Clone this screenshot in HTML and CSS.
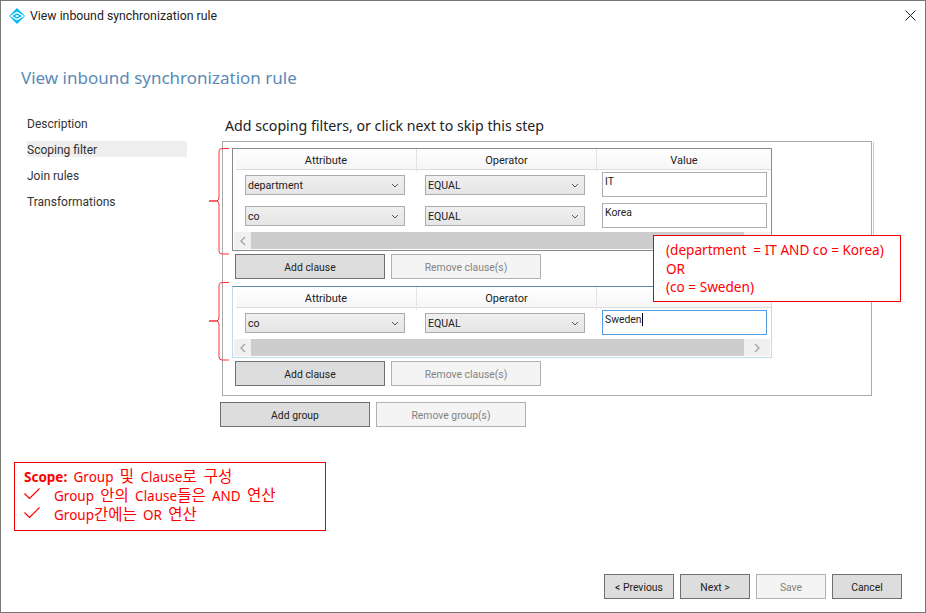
FILE: index.html
```html
<!DOCTYPE html>
<html lang="en">

<head>
    <meta charset="UTF-8">
    <title>View inbound synchronization rule</title>
    <link rel="stylesheet" href="styles.css">
</head>

<body>

    <div class="window">
        <header class="titlebar">
            <svg class="app-icon" viewBox="0 0 16 16">
                <path fill="#00b9f5" d="M8 0l8 8-8 8-8-8z"/>
                <path fill="none" stroke="#fff" stroke-width="1.4" d="M2 8l6-3.6L14 8l-6 3.6z"/>
                <path fill="#fff" d="M8 6.8L10 8 8 9.2 6 8z"/>
            </svg>
            <span class="titlebar-text">View inbound synchronization rule</span>
            <svg class="close" viewBox="0 0 11 11">
                <path fill="none" stroke="#222" stroke-width="1" d="M.5.5l10 10M10.5.5l-10 10"/>
            </svg>
        </header>

        <h1 class="page-title">View inbound synchronization rule</h1>

        <div class="content">
            <nav class="steps">
                <div class="step">Description</div>
                <div class="step step-active">Scoping filter</div>
                <div class="step">Join rules</div>
                <div class="step">Transformations</div>
            </nav>

            <main class="panel">
                <h2 class="panel-title">Add scoping filters, or click next to skip this step</h2>

                <div class="group-box">
                    <div class="clause-table">
                        <div class="clause-row clause-head">
                            <div class="head-cell">Attribute</div>
                            <div class="head-cell">Operator</div>
                            <div class="head-cell">Value</div>
                        </div>
                        <div class="clause-row">
                            <div class="combo combo-attr"><span>department</span>
                                <svg class="chevron" viewBox="0 0 8 5"><path d="M1 1l3 3 3-3"/></svg></div>
                            <div class="combo"><span>EQUAL</span>
                                <svg class="chevron" viewBox="0 0 8 5"><path d="M1 1l3 3 3-3"/></svg></div>
                            <div class="value-box">IT</div>
                        </div>
                        <div class="clause-row">
                            <div class="combo combo-attr"><span>co</span>
                                <svg class="chevron" viewBox="0 0 8 5"><path d="M1 1l3 3 3-3"/></svg></div>
                            <div class="combo"><span>EQUAL</span>
                                <svg class="chevron" viewBox="0 0 8 5"><path d="M1 1l3 3 3-3"/></svg></div>
                            <div class="value-box">Korea</div>
                        </div>
                        <div class="scrollbar">
                            <div class="scroll-btn"><svg viewBox="0 0 6 10"><path d="M5 1L1 5l4 4"/></svg></div>
                            <div class="scroll-thumb"></div>
                            <div class="scroll-btn scroll-btn-end"><svg viewBox="0 0 6 10"><path d="M1 1l4 4-4 4"/></svg></div>
                        </div>
                    </div>
                    <div class="btn-row btn-row-clause">
                        <button class="btn btn-wide">Add clause</button>
                        <button class="btn btn-wide btn-off">Remove clause(s)</button>
                    </div>

                    <div class="clause-table clause-table-focus">
                        <div class="clause-row clause-head">
                            <div class="head-cell">Attribute</div>
                            <div class="head-cell">Operator</div>
                            <div class="head-cell"></div>
                        </div>
                        <div class="clause-row">
                            <div class="combo combo-attr"><span>co</span>
                                <svg class="chevron" viewBox="0 0 8 5"><path d="M1 1l3 3 3-3"/></svg></div>
                            <div class="combo"><span>EQUAL</span>
                                <svg class="chevron" viewBox="0 0 8 5"><path d="M1 1l3 3 3-3"/></svg></div>
                            <div class="value-box value-focus"><span class="caret">Sweden</span></div>
                        </div>
                        <div class="scrollbar">
                            <div class="scroll-btn"><svg viewBox="0 0 6 10"><path d="M5 1L1 5l4 4"/></svg></div>
                            <div class="scroll-thumb"></div>
                            <div class="scroll-btn scroll-btn-end"><svg viewBox="0 0 6 10"><path d="M1 1l4 4-4 4"/></svg></div>
                        </div>
                    </div>
                    <div class="btn-row btn-row-clause">
                        <button class="btn btn-wide">Add clause</button>
                        <button class="btn btn-wide btn-off">Remove clause(s)</button>
                    </div>
                </div>

                <div class="btn-row btn-row-group">
                    <button class="btn btn-wide">Add group</button>
                    <button class="btn btn-wide btn-off">Remove group(s)</button>
                </div>
            </main>
        </div>

        <footer class="footer">
            <button class="btn btn-nav">&lt; Previous</button>
            <button class="btn btn-nav">Next &gt;</button>
            <button class="btn btn-nav btn-off">Save</button>
            <button class="btn btn-nav">Cancel</button>
        </footer>

        <!-- red notes drawn on top of the screenshot -->
        <svg class="braces" viewBox="205 140 30 230">
            <path d="M229 148.5h-7q-3 0-3 3V198q0 3-3 3h-7h7q3 0 3 3v47q0 3 3 3h7"/>
            <path d="M229 282.5h-7q-3 0-3 3V318q0 3-3 3h-7h7q3 0 3 3v33q0 3 3 3h7"/>
        </svg>

        <div class="note note-logic">
            <div>(department&nbsp; = IT AND co = Korea)</div>
            <div>OR</div>
            <div>(co = Sweden)</div>
        </div>

        <div class="note note-scope">
            <div class="note-line"><b>Scope:</b> Group <span class="ko">및</span> Clause<span class="ko">로 구성</span></div>
            <div class="note-line note-check">
                <svg viewBox="0 0 16 11"><path d="M.5 5.5l5 5L15.5.5"/></svg>
                <span>Group <span class="ko">안의</span> Clause<span class="ko">들은</span> AND <span class="ko">연산</span></span>
            </div>
            <div class="note-line note-check">
                <svg viewBox="0 0 16 11"><path d="M.5 5.5l5 5L15.5.5"/></svg>
                <span>Group<span class="ko">간에는</span> OR <span class="ko">연산</span></span>
            </div>
        </div>
    </div>

</body>

</html>
```

FILE: styles.css
```css
body {
    margin: 0;
    background-color: #fff;
    color: #222;
    font-family: Roboto, "Noto Sans", sans-serif;
    font-size: 11px;
}

.window {
    position: relative;
    box-sizing: border-box;
    width: 926px;
    height: 613px;
    border: 1px solid #777;
    display: flex;
    flex-direction: column;
    overflow: hidden;
}

.titlebar {
    height: 30px;
    display: flex;
    align-items: center;
    padding: 0 9px 0 8px;
}

.app-icon {
    width: 16px;
    height: 16px;
    margin-right: 5px;
}

.titlebar-text {
    font-size: 12.3px;
}

.close {
    width: 11px;
    height: 11px;
    margin: 0 0 2px auto;
}

.page-title {
    margin: 35px 0 0 20px;
    font-family: "Noto Sans", sans-serif;
    font-size: 17px;
    line-height: 24px;
    font-weight: 400;
    color: #5a8ab5;
}

.content {
    display: flex;
    margin-top: 25px;
}

.steps {
    width: 160px;
    margin-left: 26px;
    display: flex;
    flex-direction: column;
    gap: 10px;
}

.step {
    height: 16px;
    line-height: 19px;
    font-size: 12px;
    color: #333;
}

.step-active {
    background-color: #eee;
}

.panel {
    margin: 1px 0 0 33px;
}

.panel-title {
    margin: 0 0 5px 5px;
    font-family: "Noto Sans", sans-serif;
    font-size: 14.2px;
    line-height: 20px;
    font-weight: 400;
}

.group-box {
    position: relative;
    box-sizing: border-box;
    width: 650px;
    height: 255px;
    margin-left: 2px;
    padding: 6px 0 0 9px;
    border: 1px solid #aaa;
}

.group-box::after {
    content: "";
    position: absolute;
    top: 0;
    right: -3px;
    width: 1px;
    height: 95px;
    background-color: #ccc;
}

.clause-table {
    box-sizing: border-box;
    width: 540px;
    padding-bottom: 1px;
    border: 1px solid #8a8a8a;
}

.clause-table-focus {
    margin-top: 7px;
    border-color: #c0dcec;
    border-top-color: #5b8db5;
}

.clause-row {
    display: grid;
    grid-template-columns: 180px 180px 175px;
    margin-left: 3px;
}

.clause-head {
    height: 21px;
    box-sizing: border-box;
    border-bottom: 1px solid #ddd;
    background: linear-gradient(#fff, #f6f6f6);
}

.head-cell {
    line-height: 23px;
    text-align: center;
    border-left: 1px solid #e4e4e4;
}

.head-cell:first-child {
    border-left: 0;
}

.combo {
    box-sizing: border-box;
    width: 160px;
    height: 20px;
    margin: 5px 0 0 9px;
    padding: 0 5px 0 2px;
    display: flex;
    align-items: center;
    justify-content: space-between;
    border: 1px solid #acacac;
    background: linear-gradient(#f0f0f0, #e5e5e5);
    font-size: 10.6px;
}

.chevron {
    width: 8px;
    height: 5px;
    fill: none;
    stroke: #555;
}

.value-box {
    box-sizing: border-box;
    width: 165px;
    height: 25px;
    margin: 2px 0 4px 6px;
    padding: 0 2px;
    font-size: 10.4px;
    line-height: 18px;
    border: 1px solid #abadb3;
}

.value-focus {
    border-color: #569de5;
}

.caret {
    border-right: 1px solid #000;
}

.scrollbar {
    height: 17px;
    margin: 0 1px;
    display: flex;
    background-color: #f0f0f0;
}

.scroll-btn {
    width: 17px;
    display: flex;
    align-items: center;
    justify-content: center;
}

.scroll-btn-end {
    width: 26px;
}

.scroll-btn svg {
    width: 6px;
    height: 10px;
    fill: none;
    stroke: #a6a6a6;
    stroke-width: 1.4;
}

.scroll-thumb {
    flex: 1;
    background-color: #cdcdcd;
}

.btn-row {
    display: flex;
    gap: 6px;
}

.btn-row-clause {
    margin: 3px 0 0 3px;
}

.btn-row-group {
    margin-top: 6px;
}

.btn {
    box-sizing: border-box;
    height: 25px;
    padding: 2px 0 0;
    border: 1px solid #707070;
    background-color: #ddd;
    color: #222;
    font-family: inherit;
    font-size: 10.4px;
}

.btn-wide {
    width: 150px;
}

.btn-nav {
    width: 70px;
}

.btn-off {
    border-color: #adb2b5;
    background-color: #f4f4f4;
    color: #838383;
}

.footer {
    margin-top: auto;
    padding: 0 23px 13px 0;
    display: flex;
    justify-content: flex-end;
    gap: 6px;
}

.braces {
    position: absolute;
    left: 204px;
    top: 139px;
    width: 30px;
    height: 230px;
    fill: none;
    stroke: #f33;
    stroke-width: 1;
}

.note {
    position: absolute;
    box-sizing: border-box;
    border: 1px solid #e00;
    background-color: #fff;
    color: #f00;
    font-family: "Noto Sans", "Noto Sans CJK KR", sans-serif;
}

.note-logic {
    left: 652px;
    top: 234px;
    width: 248px;
    height: 67px;
    padding: 5px 0 0 12px;
    font-size: 13.6px;
    line-height: 18.5px;
}

.note-scope {
    left: 13px;
    top: 461px;
    width: 312px;
    height: 69px;
    padding: 4px 0 0 9px;
    font-size: 13.5px;
    line-height: 19px;
    word-spacing: 2.8px;
}

.note-line {
    height: 19px;
}

.ko {
    display: inline-block;
    font-family: "Liberation Sans", "Noto Sans CJK KR", sans-serif;
    font-size: 15.5px;
    line-height: 19px;
}

.note-check {
    display: flex;
    align-items: center;
    gap: 14px;
}

.note-check svg {
    width: 16px;
    height: 11px;
    margin-bottom: 5px;
    fill: none;
    stroke: #f00;
    stroke-width: 1.2;
}
```
